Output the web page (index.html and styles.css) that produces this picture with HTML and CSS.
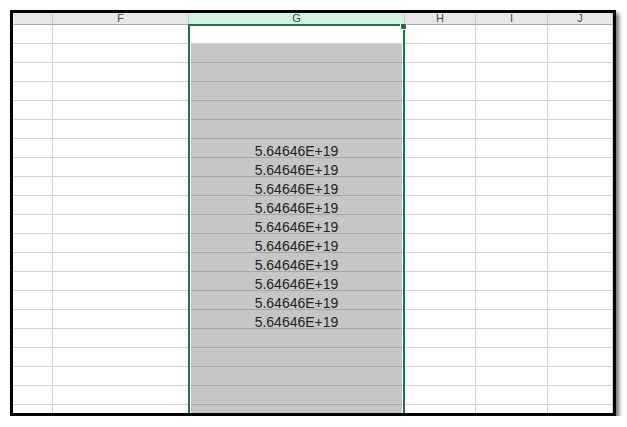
FILE: index.html
```html
<!DOCTYPE html>
<html>
<head>
<meta charset="utf-8">
<link rel="stylesheet" href="styles.css">
</head>
<body>
<div class="frame">
  <div class="sheet">
    <div class="hd"></div><div class="hd">F</div><div class="hd hd-sel">G</div><div class="hd">H</div><div class="hd">I</div><div class="hd">J</div>

    <div class="c"></div><div class="c"></div><div class="c"></div><div class="c"></div><div class="c"></div><div class="c"></div>
    <div class="c"></div><div class="c"></div><div class="c g"></div><div class="c"></div><div class="c"></div><div class="c"></div>
    <div class="c"></div><div class="c"></div><div class="c g"></div><div class="c"></div><div class="c"></div><div class="c"></div>
    <div class="c"></div><div class="c"></div><div class="c g"></div><div class="c"></div><div class="c"></div><div class="c"></div>
    <div class="c"></div><div class="c"></div><div class="c g"></div><div class="c"></div><div class="c"></div><div class="c"></div>
    <div class="c"></div><div class="c"></div><div class="c g"></div><div class="c"></div><div class="c"></div><div class="c"></div>
    <div class="c"></div><div class="c"></div><div class="c g">5.64646E+19</div><div class="c"></div><div class="c"></div><div class="c"></div>
    <div class="c"></div><div class="c"></div><div class="c g">5.64646E+19</div><div class="c"></div><div class="c"></div><div class="c"></div>
    <div class="c"></div><div class="c"></div><div class="c g">5.64646E+19</div><div class="c"></div><div class="c"></div><div class="c"></div>
    <div class="c"></div><div class="c"></div><div class="c g">5.64646E+19</div><div class="c"></div><div class="c"></div><div class="c"></div>
    <div class="c"></div><div class="c"></div><div class="c g">5.64646E+19</div><div class="c"></div><div class="c"></div><div class="c"></div>
    <div class="c"></div><div class="c"></div><div class="c g">5.64646E+19</div><div class="c"></div><div class="c"></div><div class="c"></div>
    <div class="c"></div><div class="c"></div><div class="c g">5.64646E+19</div><div class="c"></div><div class="c"></div><div class="c"></div>
    <div class="c"></div><div class="c"></div><div class="c g">5.64646E+19</div><div class="c"></div><div class="c"></div><div class="c"></div>
    <div class="c"></div><div class="c"></div><div class="c g">5.64646E+19</div><div class="c"></div><div class="c"></div><div class="c"></div>
    <div class="c"></div><div class="c"></div><div class="c g">5.64646E+19</div><div class="c"></div><div class="c"></div><div class="c"></div>
    <div class="c"></div><div class="c"></div><div class="c g"></div><div class="c"></div><div class="c"></div><div class="c"></div>
    <div class="c"></div><div class="c"></div><div class="c g"></div><div class="c"></div><div class="c"></div><div class="c"></div>
    <div class="c"></div><div class="c"></div><div class="c g"></div><div class="c"></div><div class="c"></div><div class="c"></div>
    <div class="c"></div><div class="c"></div><div class="c g"></div><div class="c"></div><div class="c"></div><div class="c"></div>
    <div class="c"></div><div class="c"></div><div class="c g"></div><div class="c"></div><div class="c"></div><div class="c"></div>

    <div class="selection"><span class="handle"></span></div>
  </div>
</div>
</body>
</html>
```

FILE: styles.css
```css
html, body {
  margin: 0;
  padding: 0;
  background: #ffffff;
}

body {
  padding: 10px 0 0 10px;
  font-family: "Liberation Sans", Arial, sans-serif;
}

.frame {
  width: 606px;
  height: 406px;
  box-sizing: border-box;
  border: 3px solid #000;
  box-shadow: 3px 3px 4px rgba(0, 0, 0, 0.55);
  overflow: hidden;
  background: #fff;
}

.sheet {
  position: relative;
  display: grid;
  grid-template-columns: 40px 136px 216px 71px 72px 1fr;
  grid-template-rows: 12px repeat(21, 19px);
  height: 400px;
  overflow: hidden;
}

.hd {
  background: #e6e6e6;
  border-right: 1px solid #c8c8c8;
  border-bottom: 1px solid #a9a9a9;
  box-sizing: border-box;
  font-size: 11px;
  line-height: 11px;
  color: #4a4a4a;
  text-align: center;
}

.hd-sel {
  background: #d3f0e0;
  color: #3c4a42;
}

.c {
  border-right: 1px solid #d4d4d4;
  border-bottom: 1px solid #d4d4d4;
  box-sizing: border-box;
  font-size: 14px;
  line-height: 14px;
  padding-top: 5px;
  color: #222222;
  text-align: center;
  white-space: nowrap;
}

.g {
  background: #c6c6c6;
  border-bottom-color: #a6a6a6;
}

.selection {
  position: absolute;
  left: 175px;
  top: 11px;
  width: 217px;
  bottom: -10px;
  box-sizing: border-box;
  border: 2px solid #217346;
  box-shadow: inset 0 0 0 1px #ffffff;
}

.handle {
  position: absolute;
  right: -4px;
  top: -2px;
  width: 5px;
  height: 5px;
  background: #217346;
  border: 1px solid #ffffff;
  border-top: none;
}
```
